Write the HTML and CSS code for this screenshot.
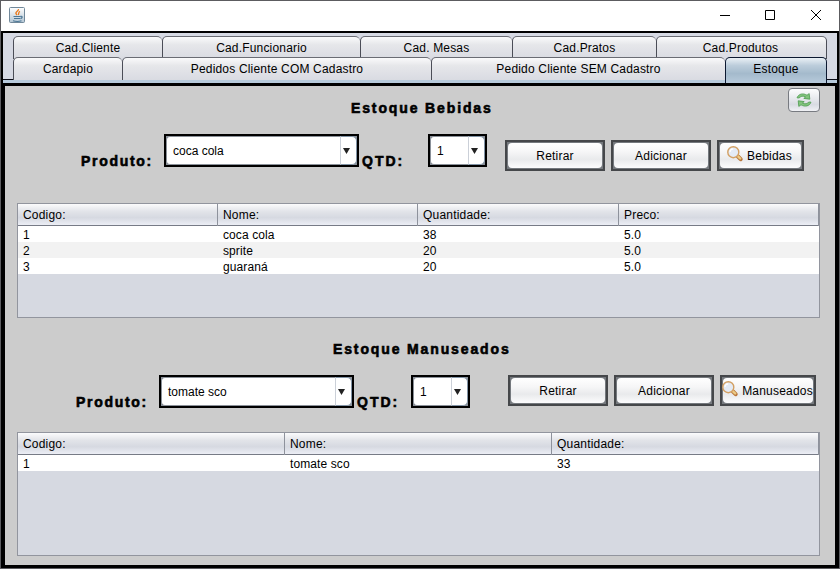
FILE: index.html
```html
<!DOCTYPE html>
<html lang="pt">
<head>
<meta charset="utf-8">
<title>Estoque</title>
<link rel="stylesheet" href="styles.css">
</head>
<body>
<svg class="defs" width="0" height="0">
  <defs>
    <symbol id="lens" viewBox="0 0 16 16">
      <path d="M11 10.500 13.600 13.200" stroke="#b9763a" stroke-width="4" stroke-linecap="round"/>
      <path d="M11 10.300 13.200 12.500" stroke="#eccb85" stroke-width="2.400" stroke-linecap="round"/>
      <circle cx="6.300" cy="6.200" r="5.500" fill="#e4ebf5" stroke="#d3a063" stroke-width="1.400"/>
      <path d="M3 6a3.400 3.400 0 0 1 3.200-3.200" fill="none" stroke="#fff" stroke-width="1.200"/>
    </symbol>
  </defs>
</svg>
<div class="window">
  <header class="titlebar">
    <svg class="java" width="17" height="17" viewBox="0 0 17 17">
      <defs><linearGradient id="jg" x1="0" y1="0" x2="0" y2="1"><stop offset="0" stop-color="#fff"/><stop offset="1" stop-color="#b4c6d4"/></linearGradient></defs>
      <rect x=".5" y=".5" width="15" height="15" rx="1" fill="url(#jg)" stroke="#71889a"/>
      <path d="M9.500 2.200c.5 1.800-4 2.700-2.300 4.800l.8 1.200M11 4.300C8.800 5.100 10.300 6.400 9.300 8" fill="none" stroke="#e9791c" stroke-width="1.300"/>
      <path d="M4.500 9.500h7M5 11.500h6M4 13.800c2.500.8 6 .8 8.500 0M11.600 9.300c2.200-.4 2 1.800-.2 2.400" fill="none" stroke="#4c7796" stroke-width="1.200"/>
    </svg>
    <svg class="controls" width="104" height="12" viewBox="0 0 104 12" fill="none" stroke="#000">
      <path d="M0 6.500h10M45.500 1.500h9v9h-9zM91 1l10 10M101 1 91 11"/>
    </svg>
  </header>
  <main class="frame">
    <nav class="tabs">
      <div class="tab-row row-a">
        <div class="tab">Cad.Cliente</div><div class="tab">Cad.Funcionario</div><div class="tab">Cad. Mesas</div><div class="tab">Cad.Pratos</div><div class="tab">Cad.Produtos</div>
      </div>
      <div class="tab-row row-b">
        <div class="tab">Cardapio</div><div class="tab">Pedidos Cliente COM Cadastro</div><div class="tab">Pedido Cliente SEM Cadastro</div><div class="tab active">Estoque</div>
      </div>
    </nav>
    <div class="strip"></div>
    <div class="panel">
      <button class="refresh" aria-label="Atualizar">
        <svg width="18" height="16" viewBox="0 0 18 16" fill="#82c47c" stroke="#4c9a50" stroke-width=".8" stroke-linejoin="round">
          <path d="M2 5.800C3.500 1.800 8 .8 12 3.200L14.200 1.600 14.800 7.200 8.800 6.400 10.600 5C8 3.600 5.500 4 4.300 6Z"/>
          <path d="M16 10.200C14.500 14.200 10 15.200 6 12.800L3.800 14.400 3.200 8.800 9.200 9.600 7.400 11C10 12.400 12.500 12 13.700 10Z"/>
        </svg>
      </button>
      <section class="drinks">
        <h2>Estoque Bebidas</h2>
        <div class="form">
          <label class="product">Produto:</label>
          <div class="combo wide"><span>coca cola</span><i></i></div>
          <label class="qty">QTD:</label>
          <div class="combo small"><span>1</span><i></i></div>
          <div class="actions">
            <button class="btn">Retirar</button>
            <button class="btn">Adicionar</button>
            <button class="btn find"><svg width="16" height="16"><use href="#lens"/></svg>Bebidas</button>
          </div>
        </div>
        <div class="table">
          <div class="tr th"><span>Codigo:</span><span>Nome:</span><span>Quantidade:</span><span>Preco:</span></div>
          <div class="tr"><span>1</span><span>coca cola</span><span>38</span><span>5.0</span></div>
          <div class="tr alt"><span>2</span><span>sprite</span><span>20</span><span>5.0</span></div>
          <div class="tr"><span>3</span><span>guaraná</span><span>20</span><span>5.0</span></div>
        </div>
      </section>
      <section class="handled">
        <h2>Estoque Manuseados</h2>
        <div class="form">
          <label class="product">Produto:</label>
          <div class="combo wide"><span>tomate sco</span><i></i></div>
          <label class="qty">QTD:</label>
          <div class="combo small"><span>1</span><i></i></div>
          <div class="actions">
            <button class="btn">Retirar</button>
            <button class="btn">Adicionar</button>
            <button class="btn find"><svg width="16" height="16"><use href="#lens"/></svg>Manuseados</button>
          </div>
        </div>
        <div class="table">
          <div class="tr th"><span>Codigo:</span><span>Nome:</span><span>Quantidade:</span></div>
          <div class="tr"><span>1</span><span>tomate sco</span><span>33</span></div>
        </div>
      </section>
    </div>
  </main>
</div>
</body>
</html>
```
FILE: styles.css
```css
* { box-sizing: border-box; }
body { margin: 0; background: #fff; overflow: hidden; font: 12px/16px "Liberation Sans", Arial, sans-serif; color: #000; }
.defs { display: block; position: absolute; }
.window { width: 840px; height: 569px; border: 1px solid #5c5c60; background: #fff; }
.titlebar { height: 30px; display: flex; justify-content: space-between; padding: 6px 15px 0 8px; }
.controls { margin: 2px 0 0; }
.frame { height: 537px; border: 2px solid #000; background: #d6d9e3; }

.tabs { padding: 3px 8px 0 10px; border-bottom: 1px solid #0c0e18; height: 47px; }
.tab-row { display: grid; }
.row-a { grid-template-columns: 149px 198px 152px 144px 171px; height: 21px; }
.row-b { grid-template-columns: 109px 309px 294px 102px; height: 23px; }
.tab { height: 23px; border: 1px solid #4b4d57; border-right-width: 0; border-bottom: 0; border-top-color: #6a6c74; border-radius: 5px 5px 0 0; background: linear-gradient(#fafafb, #e6e7ea 35%, #dfe0e6 70%, #d9dbe2); text-align: center; line-height: 22px; letter-spacing: .18px; }
.tab:last-child { border-right-width: 1px; }
.row-a .tab:last-child { padding-right: 2px; }
.row-b .tab { position: relative; line-height: 23px; }
.row-b .tab.active { height: 26px; border-color: #0c1830; border-bottom: 0; background: linear-gradient(#eaf0f5, #bccddb 30%, #a4bacc 62%, #b7cadb); }
.strip { height: 3px; background: #b7cadb; }

.panel { position: relative; height: 484px; border: solid #000; border-width: 3px 2px 2px; background: #ccc; }
.refresh { position: absolute; left: 783px; top: 2px; width: 32px; height: 24px; padding: 0; border: 1px solid #777a80; border-radius: 4px; background: linear-gradient(#fdfdfe, #e4e6eb 50%, #d8dbe2 70%, #f0f1f5); display: flex; align-items: center; justify-content: center; }

h2 { margin: 0; font: bold 14px/18px "Liberation Sans", Arial, sans-serif; letter-spacing: 1.87px; -webkit-text-stroke: .6px #000; white-space: nowrap; }
.drinks h2 { padding: 13px 0 0 346px; height: 48px; }
.handled h2 { padding: 22px 0 0 328px; height: 57px; }
.form { display: flex; align-items: flex-start; }
.drinks .form { height: 69px; padding-left: 76px; }
.handled .form { height: 57px; padding-left: 71px; }
label { font: bold 14px/18px "Liberation Sans", Arial, sans-serif; letter-spacing: 1.7px; -webkit-text-stroke: .6px #000; padding-top: 18px; white-space: nowrap; flex: none; }
.product { width: 83px; }
.qty { width: 69px; padding-left: 3px; letter-spacing: 2px; }
.handled .qty { width: 57px; }
.combo { display: flex; height: 33px; border: 2px solid #000; background: #8b9199; flex: none; }
.combo span { flex: 1; padding-left: 6px; line-height: 29px; background: #fff; border: 1px solid #8b9199; border-right: 0; border-radius: 4px 0 0 4px; }
.combo i { width: 17px; background: #fff; border: 1px solid #8294a6; border-left: 1px solid #cbd0d8; border-radius: 0 5px 5px 0; padding: 11px 0 0 2px; }
.combo i::before { content: ""; display: block; width: 7px; height: 6px; background: #222; clip-path: polygon(0 0, 100% 0, 50% 100%); }
.wide { width: 195px; }
.small { width: 59px; }
.actions { display: flex; gap: 6px; margin: 6px 0 0 18px; }
.handled .actions { margin: 0 0 0 38px; }
.btn { width: 100px; height: 31px; padding: 0; border: 2px solid #45474a; background: #75797e; font: 12px/16px "Liberation Sans", Arial, sans-serif; letter-spacing: .2px; color: #000; position: relative; z-index: 0; display: flex; align-items: center; justify-content: center; white-space: nowrap; }
.btn::before { content: ""; position: absolute; z-index: -1; inset: 1px; border-radius: 4px; background: linear-gradient(#fff, #f6f6f7 35%, #e9eaec 65%, #fcfcfd); }
.btn svg { margin: -3px 4px 0 -2px; flex: none; }
.find { width: 87px; }
.handled .find { width: 96px; }
.handled .find svg { margin-left: -1px; }

.table { margin-left: 12px; width: 803px; border: 1px solid #92959e; background: #d6d9e1; }
.drinks .table { height: 115px; }
.handled .table { height: 124px; }
.tr { display: grid; grid-template-columns: 200px 200px 201px 200px; height: 16px; background: #fff; line-height: 18px; }
.handled .tr { grid-template-columns: 267px 267px 267px; }
.tr span { padding-left: 5px; letter-spacing: .1px; }
.tr.alt { background: #f2f2f2; }
.tr.th { height: 22px; line-height: 22px; border-bottom: 1px solid #777b86; background: linear-gradient(#fbfbfc, #e2e4e9 35%, #d6d9e1 65%, #eceef5); }
.th span { border-right: 1px solid #8e929c; letter-spacing: .2px; }
```
